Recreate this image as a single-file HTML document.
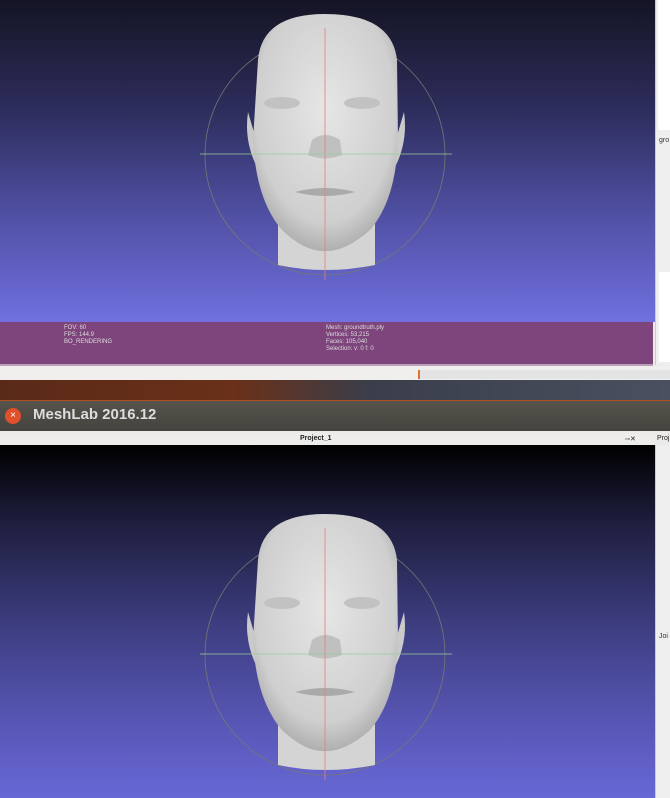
<!DOCTYPE html>
<html><head><style>
*{margin:0;padding:0}
body{width:670px;height:798px;position:relative;overflow:hidden;background:#ecebea;font-family:"Liberation Sans",sans-serif}
.a{position:absolute}
</style></head><body>
<div class="a" style="left:0;top:0;width:655px;height:322px;background:linear-gradient(#141424,#2e2e5e 35%,#4e4ea0 65%,#7070e0)"></div>
<div class="a" style="left:0;top:322px;width:653px;height:42px;background:#7d457c;border-bottom:2px solid #b8a0b8"></div>
<div class="a" style="left:64px;top:325px;font-size:6px;color:#ddd;line-height:7px">FOV: 60<br>FPS: 144.9<br>BO_RENDERING</div>
<div class="a" style="left:326px;top:325px;font-size:6px;color:#ddd;line-height:7px">Mesh: groundtruth.ply<br>Vertices: 53,215<br>Faces: 105,040<br>Selection: v: 0 f: 0</div>
<div class="a" style="left:655px;top:0;width:15px;height:365px;background:#efefef;border-left:1px solid #ccc"></div>
<div class="a" style="left:658px;top:0;width:12px;height:130px;background:#fff"></div>
<div class="a" style="left:659px;top:137px;font-size:7px;color:#333">gro</div>
<div class="a" style="left:659px;top:272px;width:11px;height:90px;background:#fff"></div>
<div class="a" style="left:0;top:366px;width:670px;height:14px;background:#f0efee"></div>
<div class="a" style="left:418px;top:370px;width:252px;height:9px;background:#e4e4e4;border-left:2px solid #e07030"></div>
<div class="a" style="left:0;top:380px;width:670px;height:20px;background:linear-gradient(90deg,#5a2a18,#6a3018 35%,#3a3e4a 55%,#4a5060);border-bottom:2px solid #b05020"></div>
<div class="a" style="left:0;top:401px;width:670px;height:30px;background:linear-gradient(#56534c,#45433e)"></div>
<div class="a" style="left:5px;top:408px;width:16px;height:16px;border-radius:50%;background:#e0502a;color:#fff;font-size:10px;text-align:center;line-height:16px">×</div>
<div class="a" style="left:33px;top:406px;font-size:15px;font-weight:bold;color:#ddd">MeshLab 2016.12</div>
<div class="a" style="left:0;top:434px;width:655px;height:11px;background:#eeedec"></div>
<div class="a" style="left:300px;top:435px;font-size:7px;color:#222;font-weight:bold">Project_1</div>
<div class="a" style="left:625px;top:435px;font-size:7px;color:#222">▫▫✕</div>
<div class="a" style="left:657px;top:435px;font-size:7px;color:#222">Proj</div>
<div class="a" style="left:0;top:445px;width:655px;height:353px;background:linear-gradient(#000,#1e1e3e 22%,#3c3c7e 50%,#5656b4 78%,#6868d6)"></div>
<div class="a" style="left:655px;top:445px;width:15px;height:353px;background:#efefef;border-left:1px solid #ccc"></div>
<div class="a" style="left:659px;top:633px;font-size:7px;color:#333">Joi</div>
<svg class="a" style="left:0;top:0" width="670" height="798">
<defs>
<radialGradient id="g" cx="50%" cy="40%" r="60%"><stop offset="0" stop-color="#e6e6e6"/><stop offset=".8" stop-color="#cfcfcf"/><stop offset="1" stop-color="#b0b0b0"/></radialGradient>
<g id="f">
<circle cx="325" cy="655" r="120" fill="none" stroke="#777" stroke-width="0.8"/>
<path d="M278 700 L278 765 Q325 775 375 765 L375 700Z" fill="#d4d4d4"/>
<path d="M248 612 Q244 640 256 665 L262 660Z M404 612 Q408 640 396 665 L390 660Z" fill="#cacaca"/>
<path d="M258 560 Q262 514 325 514 Q392 514 397 560 L398 640 Q396 700 370 730 Q345 752 325 751 Q305 752 282 730 Q256 700 253 640Z" fill="url(#g)"/>
<ellipse cx="282" cy="603" rx="18" ry="6" fill="#c2c2c2"/><ellipse cx="362" cy="603" rx="18" ry="6" fill="#c2c2c2"/>
<path d="M312 640 Q325 630 340 640 L342 655 Q325 662 308 655Z" fill="#c0c0c0"/>
<path d="M295 692 Q325 684 355 692 Q325 700 295 692Z" fill="#aaa"/>
<line x1="325" y1="528" x2="325" y2="780" stroke="#e08080" stroke-width="0.8"/>
<line x1="200" y1="654" x2="452" y2="654" stroke="#9c9" stroke-width="0.8"/>
</g>
</defs>
<use href="#f"/>
<g transform="translate(0,-500)"><use href="#f"/></g>
</svg>
</body></html>
